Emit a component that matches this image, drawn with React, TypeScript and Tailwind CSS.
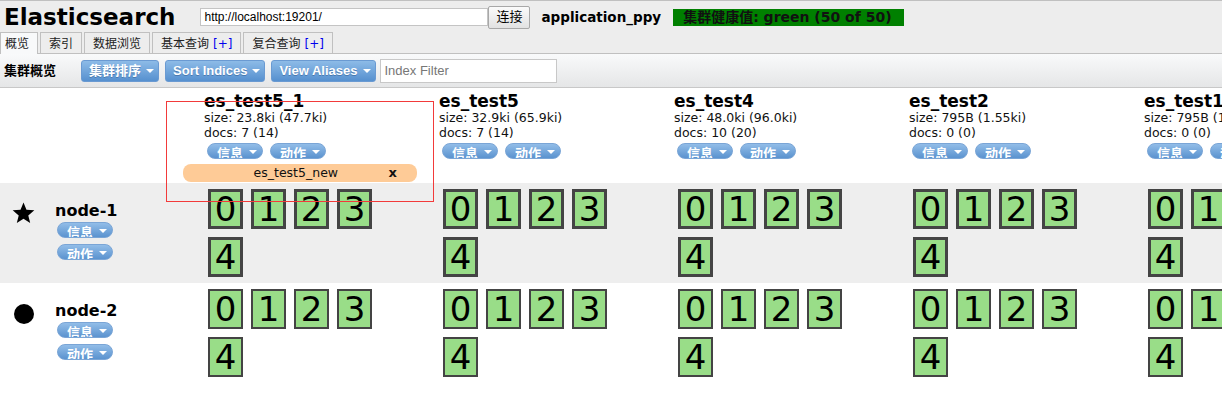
import React from 'react';

const indices = [
  { name: 'es_test5_1', size: '23.8ki (47.7ki)', docs: '7 (14)', alias: 'es_test5_new' },
  { name: 'es_test5', size: '32.9ki (65.9ki)', docs: '7 (14)' },
  { name: 'es_test4', size: '48.0ki (96.0ki)', docs: '10 (20)' },
  { name: 'es_test2', size: '795B (1.55ki)', docs: '0 (0)' },
  { name: 'es_test1', size: '795B (1.55ki)', docs: '0 (0)' },
];

const nodes = [
  { name: 'node-1', master: true, primary: true },
  { name: 'node-2', master: false, primary: false },
];

const Caret = () => (
  <span className="block w-0 h-0 border-x-[4px] border-x-transparent border-t-[4px] border-t-white" />
);

const Pill = ({ label }: { label: string }) => (
  <div className="h-[16px] w-[56px] rounded-full overflow-hidden bg-linear-to-b from-[#92bde8] to-[#5b93cf] border border-[#7aa5d6] flex items-start pl-[9px] gap-[6px] text-white font-bold text-[13px] leading-[20px]">
    <span>{label}</span>
    <span className="block mt-[6px]">
      <Caret />
    </span>
  </div>
);

const ToolButton = ({ label }: { label: string }) => (
  <div className="h-[22px] flex items-center gap-[5px] pl-[7px] pr-[4px] rounded-[3px] border border-[#6a9ad2] bg-linear-to-b from-[#8dbbe7] to-[#5690cf] text-white font-bold text-[13px] font-['Liberation_Sans','Noto_Sans_CJK_SC',sans-serif] [text-shadow:0_1px_0_#4a7ab0]">
    <span>{label}</span>
    <Caret />
  </div>
);

const Shard = ({ n, primary }: { n: number; primary: boolean }) => (
  <div
    className={`w-[35px] h-[40px] bg-[#99dd88] border-[#444444] flex items-center justify-center text-[34px] leading-none text-black ${
      primary ? 'border-[3px]' : 'border-[2px]'
    }`}
  >
    {n}
  </div>
);

const Tab = ({ label, plus, active }: { label: string; plus?: boolean; active?: boolean }) => (
  <div
    className={`h-[21px] border border-[#c0c0c0] border-b-0 text-[12px] leading-[22px] text-[#222] ${
      active ? 'bg-[#f8f9fa] pl-[4px] pr-[8px] relative z-10 -mb-px h-[22px]' : 'bg-[#ededed] px-[8px] ml-[2px]'
    }`}
  >
    {label}
    {plus && <span className="text-[#0000ee] ml-[4px]">[+]</span>}
  </div>
);

export default function App() {
  return (
    <div className="w-[1222px] h-[398px] overflow-hidden bg-white relative font-['DejaVu_Sans','Noto_Sans_CJK_SC',sans-serif] text-[#111]">
      {/* header */}
      <div className="h-[54px] bg-[#ededed] border-y border-[#c0c0c0]">
        <div className="h-[32px] flex items-center">
          <div className="ml-[4px] text-[23px] font-bold leading-none text-black">Elasticsearch</div>
          <div className="ml-[25px] w-[288px] h-[18px] bg-white border border-[#c4c4c4] text-[12px] leading-[16px] pl-[3px] font-['Liberation_Sans',sans-serif] text-black">
            http://localhost:19201/
          </div>
          <div className="h-[23px] w-[42px] flex items-center justify-center border border-[#a8a8a8] rounded-[2px] bg-linear-to-b from-[#fbfbfb] to-[#e2e2e2] text-[13px] text-black">
            连接
          </div>
          <div className="ml-[11px] text-[13.5px] font-bold text-black">application_ppy</div>
          <div className="ml-[12px] w-[231px] h-[17px] bg-[#008000] text-[14px] font-bold leading-[17px] pl-[10px] text-[#111] whitespace-nowrap">
            集群健康值: green (50 of 50)
          </div>
        </div>
        <div className="h-[20px] flex items-end">
          <Tab label="概览" active />
          <Tab label="索引" />
          <Tab label="数据浏览" />
          <Tab label="基本查询" plus />
          <Tab label="复合查询" plus />
        </div>
      </div>

      {/* toolbar */}
      <div className="h-[34px] bg-linear-to-b from-[#f9fafb] to-[#e5e6e7] border-b border-[#c8c8c8] flex items-center">
        <div className="ml-[4px] w-[77px] text-[13px] font-bold text-black">集群概览</div>
        <ToolButton label="集群排序" />
        <div className="ml-[6px]">
          <ToolButton label="Sort Indices" />
        </div>
        <div className="ml-[6px]">
          <ToolButton label="View Aliases" />
        </div>
        <div className="ml-[4px] w-[177px] h-[24px] bg-white border border-[#c8c8c8] text-[13px] leading-[22px] pl-[4px] text-[#777] font-['Liberation_Sans',sans-serif]">
          Index Filter
        </div>
      </div>

      {/* index headers */}
      <div className="h-[95px] grid grid-cols-[204px_repeat(5,235px)]">
        <div />
        {indices.map((ix) => (
          <div key={ix.name} className="pt-[3px]">
            <div className="text-[17px] font-bold leading-[20px] text-black">{ix.name}</div>
            <div className="text-[12.5px] leading-[14.5px]">size: {ix.size}</div>
            <div className="text-[12.5px] leading-[14.5px]">docs: {ix.docs}</div>
            <div className="flex gap-[7px] mt-[3px] ml-[3px]">
              <Pill label="信息" />
              <Pill label="动作" />
            </div>
            {ix.alias && (
              <div className="mt-[5px] -ml-[21px] w-[234px] h-[18px] rounded-[8px] bg-[#fecb97] flex items-center text-[12.5px]">
                <span className="flex-1 text-center pl-[20px]">{ix.alias}</span>
                <span className="font-bold text-[13px] pr-[20px]">x</span>
              </div>
            )}
          </div>
        ))}
      </div>

      {/* node rows */}
      {nodes.map((node, i) => (
        <div
          key={node.name}
          className={`h-[100px] grid grid-cols-[204px_repeat(5,235px)] ${i === 0 ? 'bg-[#eeeeee]' : 'bg-white'}`}
        >
          <div className="flex pt-[19px]">
            <div className="w-[55px] flex justify-center pl-[2px] pr-[10px]">
              {node.master ? (
                <svg width="23" height="22" viewBox="0 0 24 23">
                  <path d="M12 0.5l3.1 7.6 8.2 0.6-6.3 5.3 2 8-7-4.4-7 4.4 2-8-6.3-5.3 8.2-0.6z" fill="#000" />
                </svg>
              ) : (
                <div className="w-[20px] h-[20px] rounded-full bg-black mt-[2px]" />
              )}
            </div>
            <div>
              <div className="text-[16px] font-bold leading-[18px] text-black">{node.name}</div>
              <div className="ml-[2px] mt-[2px] flex flex-col gap-[6px]">
                <Pill label="信息" />
                <Pill label="动作" />
              </div>
            </div>
          </div>
          {indices.map((ix) => (
            <div key={ix.name} className="pt-[6px] pl-[4px]">
              <div className="w-[180px] flex flex-wrap gap-[8px]">
                {[0, 1, 2, 3, 4].map((n) => (
                  <Shard key={n} n={n} primary={node.primary} />
                ))}
              </div>
            </div>
          ))}
        </div>
      ))}

      {/* annotation box */}
      <div className="absolute left-[166px] top-[101px] w-[268px] h-[101px] border border-[#f23a3a] pointer-events-none" />
    </div>
  );
}
